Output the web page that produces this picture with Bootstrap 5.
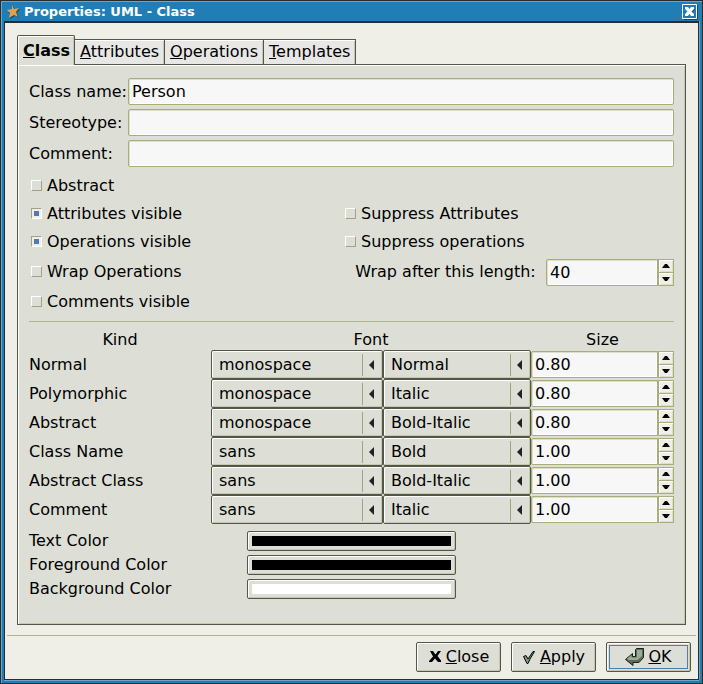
<!DOCTYPE html>
<html lang="en">
<head>
<meta charset="utf-8">
<meta name="viewport" content="width=device-width, initial-scale=1">
<title>Properties: UML - Class</title>
<link rel="stylesheet" href="https://cdn.jsdelivr.net/npm/bootstrap@5.3.0/dist/css/bootstrap.min.css">
<style>
  :root {
    --win: #efefe7;
    --pane: #dddfd7;
    --edge: #55564a;
    --olive: #a9ad7c;
    --shade: #c6c8ae;
    --blue: #217db5;
  }
  body {
    font: 16px/20px "DejaVu Sans", sans-serif;
    color: #000;
    background: var(--win);
  }
  .frame {
    border: 1px solid #2b2b2b;
    background: var(--blue);
    box-shadow: inset 1px 1px #6aa5cb;
    padding: 1px 3px 3px;
  }
  .titlebar { height: 19px; font-size: 13px; font-weight: bold; color: #fff; padding: 0 1px 0 3px; }
  .titlebar button { width: 16px; height: 16px; }
  .titlebar button svg, .titlebar span svg { display: block; }
  .client {
    background: var(--win);
    border: 1px solid #2b2b2b;
    border-top-width: 2px;
    box-shadow: 0 1px #6aa5cb, 1px 0 #6aa5cb;
  }
  .book { padding: 12px 12px 10px; }
  .page-tabs { margin-bottom: -1px; border: 0; position: relative; }
  .page-tabs .nav-link {
    font: inherit; color: #000; border: 1px solid var(--edge); border-left-width: 0; border-radius: 0;
    background: #e7e7e5; height: 26px; padding: 2px 5px 2px 4px; margin: 0;
    box-shadow: inset 0 1px #fff, inset -1px 0 var(--shade);
  }
  .page-tabs .nav-link + .nav-link { padding-left: 5px; }
  .page-tabs .nav-link.active {
    background: var(--pane); color: #000; font-weight: bold; height: 30px; padding: 4px 4px 4px 5px;
    border-left-width: 1px; border-bottom-width: 0; border-radius: 2px 2px 0 0;
    box-shadow: inset 1px 1px #fff, inset -1px 0 var(--shade);
  }
  .pane {
    background: var(--pane);
    border: 1px solid var(--edge);
    box-shadow: inset 1px 1px #fff, inset -1px -1px var(--shade);
    padding: 13px 11px 22px;
  }
  .entry {
    font: inherit; color: #000; background: #f7f7f7; border: 1px solid var(--olive); border-radius: 2px;
    height: 27px; padding: 0 3px; min-width: 0; outline: 0;
    box-shadow: inset 1px 1px #dedfc8, inset -1px -1px #fff;
  }
  .field-name { width: 99px; white-space: nowrap; }
  .ticks { padding-top: 5px; }
  .tick-row { height: 28px; }
  .tick-row.tall { height: 32px; }
  .tick-left { width: 49%; }
  .tick {
    appearance: none; width: 11px; height: 11px; margin: 0 5px 1px 2px; flex: none;
    border: 1px solid; border-color: #fff #a5a284 #a5a284 #fff; background: var(--pane);
  }
  .tick:checked {
    border-color: #a5a284 #fff #fff #a5a284;
    background: linear-gradient(#527bb5, #527bb5) center / 5px 5px no-repeat #efefe7;
  }
  .rule { height: 1px; background: #b0b594; }
  .pane .rule { margin: 5px 0 8px; }
  .foot-rule { margin: 0 2px; }
  .spin .entry { border-radius: 2px 0 0 2px; appearance: textfield; -moz-appearance: textfield; }
  .spin .entry::-webkit-inner-spin-button { appearance: none; margin: 0; }
  .spin-length { width: 128px; }
  .steps { width: 16px; height: 27px; flex: none; }
  .steps button {
    border: 1px solid var(--olive); background: #efefe7; height: 14px; padding: 0;
    display: flex; align-items: center; justify-content: center;
    box-shadow: inset 1px 1px #fff, inset -1px -1px #dedfc8;
  }
  .steps button + button { margin-top: -1px; }
  .fonts { width: 100%; table-layout: fixed; border-collapse: collapse; }
  .fonts th { font-weight: normal; text-align: center; height: 20px; padding: 0; }
  .fonts tbody th { text-align: left; height: 29px; }
  .fonts td { padding: 0; height: 29px; }
  .w-kind { width: 182px; } .w-family { width: 172px; } .w-style { width: 148px; }
  .combo {
    display: block; appearance: none; font: inherit; color: #000; width: 100%; height: 29px;
    border: 1px solid var(--edge); border-radius: 2px; padding: 0 24px 0 7px; outline: 0;
    background:
      url("data:image/svg+xml,%3Csvg xmlns='http://www.w3.org/2000/svg' width='5' height='10'%3E%3Cpath d='M5 0v10L0 5z' fill='%23222'/%3E%3C/svg%3E") right 8px center no-repeat,
      linear-gradient(#a5a284, #a5a284) right 19px center / 1px 22px no-repeat,
      var(--pane);
    box-shadow: inset 1px 1px #fff, inset -1px -1px var(--shade);
  }
  .colors { margin-top: 5px; }
  .color-row { height: 24px; }
  .color-row label { width: 218px; }
  .color-pick {
    appearance: none; width: 209px; height: 20px; padding: 4px; border: 1px solid var(--edge); border-radius: 2px;
    background: var(--pane); box-shadow: inset 1px 1px #fff, inset -1px -1px var(--shade);
  }
  .color-pick::-webkit-color-swatch-wrapper { padding: 0; }
  .color-pick::-webkit-color-swatch { border: 0; border-radius: 0; }
  .actions { padding: 6px 7px 7px; gap: 10px; }
  .act {
    font: inherit; color: #000; width: 85px; height: 30px; border: 1px solid var(--edge); border-radius: 2px;
    background: var(--pane); box-shadow: inset 1px 1px #fff, inset -1px -1px var(--shade);
    display: flex; align-items: center; justify-content: center; padding: 0;
  }
  .act.preset { outline: 1px solid #527bb5; outline-offset: -4px; }
</style>
<script src="https://cdn.jsdelivr.net/npm/bootstrap@5.3.0/dist/js/bootstrap.bundle.min.js"></script>
</head>
<body>
<main class="frame min-vh-100 d-flex flex-column">
  <header class="titlebar d-flex align-items-center">
    <span class="me-1"><svg width="13" height="14" viewBox="0 0 13 14"><path d="M6 1l2 4 5-1-3 4 2 5-4-2-5 3v-5L1 7l4-2z" fill="#124a70"/><path d="M5 0l2 4 5-1-3 4 2 5-4-2-5 3 1-5-3-3 5-1z" fill="#dfa052"/></svg></span>
    <span class="flex-grow-1">Properties: UML - Class</span>
    <button type="button" class="border-0 p-0 bg-transparent" aria-label="Close window"><svg width="16" height="16" viewBox="0 0 16 16"><path d="M1.500 15.500h14v-14" fill="none" stroke="#124a70"/><path d="M.5.5h14v14H.5z" fill="none" stroke="#fff"/><path d="M5 5l7 7M12 5l-7 7" stroke="#124a70" stroke-width="2"/><path d="M3 3h3l1.500 2L9 3h3v2L9.500 7.500 12 10v2H9l-1.500-2L6 12H3v-2l2.500-2.500L3 5z" fill="#fff"/></svg></button>
  </header>
  <div class="client flex-grow-1 d-flex flex-column">
    <div class="book flex-grow-1 d-flex flex-column">
      <div class="page-tabs nav d-flex align-items-end" role="tablist">
        <button type="button" class="nav-link active" role="tab" aria-selected="true"><u>C</u>lass</button>
        <button type="button" class="nav-link" role="tab"><u>A</u>ttributes</button>
        <button type="button" class="nav-link" role="tab"><u>O</u>perations</button>
        <button type="button" class="nav-link" role="tab"><u>T</u>emplates</button>
      </div>
      <form class="pane flex-grow-1" id="props">
        <div class="d-flex flex-column gap-1">
          <div class="d-flex align-items-center"><label class="field-name" for="cname">Class name:</label><input id="cname" class="entry flex-grow-1" type="text" value="Person"></div>
          <div class="d-flex align-items-center"><label class="field-name" for="stereo">Stereotype:</label><input id="stereo" class="entry flex-grow-1" type="text"></div>
          <div class="d-flex align-items-center"><label class="field-name" for="comment">Comment:</label><input id="comment" class="entry flex-grow-1" type="text"></div>
        </div>
        <div class="ticks">
          <div class="tick-row d-flex align-items-center"><input class="tick" type="checkbox" id="abs"><label for="abs">Abstract</label></div>
          <div class="tick-row d-flex align-items-center">
            <div class="tick-left d-flex align-items-center"><input class="tick" type="checkbox" id="attv" checked><label for="attv">Attributes visible</label></div>
            <input class="tick ms-0" type="checkbox" id="supa"><label for="supa">Suppress Attributes</label>
          </div>
          <div class="tick-row d-flex align-items-center">
            <div class="tick-left d-flex align-items-center"><input class="tick" type="checkbox" id="opv" checked><label for="opv">Operations visible</label></div>
            <input class="tick ms-0" type="checkbox" id="supo"><label for="supo">Suppress operations</label>
          </div>
          <div class="tick-row tall d-flex align-items-center">
            <div class="tick-left d-flex align-items-center"><input class="tick" type="checkbox" id="wrapo"><label for="wrapo">Wrap Operations</label></div>
            <label class="flex-grow-1 text-center" for="wraplen">Wrap after this length:</label>
            <div class="spin spin-length d-flex"><input id="wraplen" class="entry flex-grow-1" type="number" value="40"><span class="steps d-flex flex-column"><button type="button" aria-label="Increase"><svg width="8" height="4" viewBox="0 0 8 4"><path d="M0 4l3-4h2l3 4z"/></svg></button><button type="button" aria-label="Decrease"><svg width="8" height="4" viewBox="0 0 8 4"><path d="M0 0h8L5 4H3z"/></svg></button></span></div>
          </div>
          <div class="tick-row d-flex align-items-center"><input class="tick" type="checkbox" id="comv"><label for="comv">Comments visible</label></div>
        </div>
        <div class="rule"></div>
        <table class="fonts">
          <colgroup><col class="w-kind"><col class="w-family"><col class="w-style"><col></colgroup>
          <thead><tr><th scope="col">Kind</th><th scope="col" colspan="2">Font</th><th scope="col">Size</th></tr></thead>
          <tbody id="fontRows"></tbody>
        </table>
        <div class="colors">
          <div class="color-row d-flex align-items-center"><label for="ctext">Text Color</label><input id="ctext" class="color-pick" type="color" value="#000000"></div>
          <div class="color-row d-flex align-items-center"><label for="cfore">Foreground Color</label><input id="cfore" class="color-pick" type="color" value="#000000"></div>
          <div class="color-row d-flex align-items-center"><label for="cback">Background Color</label><input id="cback" class="color-pick" type="color" value="#ffffff"></div>
        </div>
      </form>
    </div>
    <div class="rule foot-rule"></div>
    <footer class="actions d-flex justify-content-end">
      <button type="button" class="act"><svg class="me-1" width="14" height="14" viewBox="0 0 14 14"><path d="M2 1h3l2.500 3.500L10 1h3L9.500 6l3.500 4.500V12h-3L7 8.500 4 12H1v-1l4-4.500z"/></svg><span><u>C</u>lose</span></button>
      <button type="button" class="act"><svg class="me-1" width="14" height="15" viewBox="0 0 14 15"><path d="M1.500 6.500L4 5.500l2 3.500 5-7.500h1.500L8 9l-2 4.500H5z" fill="#7f9c76" stroke="#000"/></svg><span><u>A</u>pply</span></button>
      <button type="submit" form="props" class="act preset"><svg class="me-1" width="19" height="18" viewBox="0 0 19 18"><path d="M.5 11.500l7-6v3h3v-7l1-1h7v9l-4.500 5H8v3z" fill="#5b6b58" stroke="#1c211b"/><path d="M2 11l4.500-4v2.500H12V2h5v6l-4.500 4H4z" fill="#9cac94"/></svg><span><u>O</u>K</span></button>
    </footer>
  </div>
</main>
<script>
  const kinds = [
    ["Normal", "monospace", "Normal", "0.80"],
    ["Polymorphic", "monospace", "Italic", "0.80"],
    ["Abstract", "monospace", "Bold-Italic", "0.80"],
    ["Class Name", "sans", "Bold", "1.00"],
    ["Abstract Class", "sans", "Bold-Italic", "1.00"],
    ["Comment", "sans", "Italic", "1.00"]
  ];
  const steps = document.querySelector(".steps").outerHTML;
  document.getElementById("fontRows").innerHTML = kinds.map(([k, f, s, z]) => `
    <tr><th scope="row">${k}</th>
      <td><select class="combo" aria-label="${k} font"><option>${f}</option></select></td>
      <td><select class="combo" aria-label="${k} style"><option>${s}</option></select></td>
      <td><div class="spin d-flex"><input class="entry flex-grow-1" type="number" step="0.1" aria-label="${k} size" value="${z}">${steps}</div></td></tr>`).join("");
  document.querySelectorAll(".steps").forEach(box => {
    const field = box.previousElementSibling;
    box.firstElementChild.addEventListener("click", () => field.stepUp());
    box.lastElementChild.addEventListener("click", () => field.stepDown());
  });
</script>
</body>
</html>
